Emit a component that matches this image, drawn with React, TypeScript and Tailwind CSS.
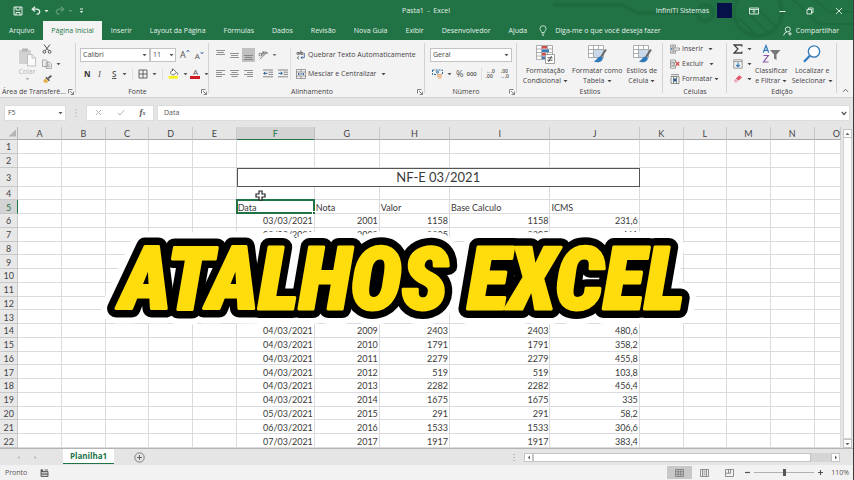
import type { ReactNode } from 'react';

type IconProps = {
  w: number;
  h: number;
  children: ReactNode;
  className?: string;
};

function Icon({ w, h, children, className = '' }: IconProps) {
  return (
    <svg width={w} height={h} viewBox={`0 0 ${w} ${h}`} fill="none" stroke="currentColor" className={`shrink-0 ${className}`} aria-hidden="true">
      {children}
    </svg>
  );
}

function Caret() {
  return (
    <Icon w={5} h={4}>
      <path d="M0.5 1h4L2.5 3.2z" fill="currentColor" stroke="none" />
    </Icon>
  );
}

function Launcher() {
  return (
    <button type="button" aria-label="Mais opções" className="absolute right-[2px] bottom-[2px] text-[#666]">
      <Icon w={6} h={6}>
        <path d="M0.5 4.5v-4h4M2.2 2.2l3 3M5.5 2.6v2.9H2.6" strokeWidth={0.8} />
      </Icon>
    </button>
  );
}

type GroupProps = {
  label: string;
  width: string;
  launcher?: boolean;
  children: ReactNode;
};

function Group({ label, width, launcher, children }: GroupProps) {
  return (
    <section className={`relative flex shrink-0 flex-col ${width}`}>
      <div className="flex flex-1 items-center pt-px">{children}</div>
      <h2 className={`text-center leading-[10px] whitespace-nowrap text-[#444] ${launcher ? 'pr-3 pl-[2px]' : ''}`}>{label}</h2>
      {launcher && <Launcher />}
      <span className="absolute top-[3px] right-0 bottom-1 w-px bg-[#d2d2d2]" />
    </section>
  );
}

function IconButton({ label, caret, active, children }: { label: string; caret?: boolean; active?: boolean; children: ReactNode }) {
  return (
    <button type="button" aria-label={label} className={`flex h-[14px] items-center gap-1 ${active ? 'bg-[#c0c0c0] px-[2px]' : ''}`}>
      {children}
      {caret && <Caret />}
    </button>
  );
}

const alignPaths = {
  top: 'M0 .5h9M1 2.5h7M0 4.5h9',
  middle: 'M0 3.5h9M1 5.5h7M0 7.5h9',
  bottom: 'M0 5.5h9M1 7.5h7M0 9.5h9',
  left: 'M0 1.5h9M0 3.5h6M0 5.5h9M0 7.5h6',
  center: 'M0 1.5h9M1.5 3.5h6M0 5.5h9M1.5 7.5h6',
  right: 'M0 1.5h9M3 3.5h6M0 5.5h9M3 7.5h6',
};

function Lines({ d }: { d: string }) {
  return (
    <Icon w={9} h={10}>
      <path d={d} strokeWidth={0.8} />
    </Icon>
  );
}

function TitleBar() {
  return (
    <header className="relative flex h-[21px] shrink-0 items-center text-[#e6f1ea]">
      <div className="flex flex-1 items-center gap-[6px] pl-[13px]">
        <button type="button" aria-label="Salvar">
          <Icon w={10} h={10}>
            <path d="M1 1h8v8H1zM3 1v3h4V1M3 9V6.5h4V9" />
          </Icon>
        </button>
        <button type="button" aria-label="Desfazer" className="flex items-center gap-[3px] pl-[2px]">
          <Icon w={10} h={9}>
            <path d="M4 .8L1.3 3.2L4 5.6M1.5 3.2h4.2c4 0 4 5-.2 5" strokeWidth={1.3} />
          </Icon>
          <Caret />
        </button>
        <button type="button" aria-label="Refazer" className="flex items-center gap-[3px] opacity-30">
          <Icon w={10} h={9}>
            <path d="M6 .8L8.7 3.2L6 5.6M8.5 3.2H4.3c-4 0-4 5 .2 5" strokeWidth={1.3} />
          </Icon>
          <Caret />
        </button>
        <button type="button" aria-label="Personalizar barra" className="flex items-center">
          <Icon w={5} h={6}>
            <path d="M1 1h3" />
            <path d="M.7 3h3.6L2.5 5z" fill="currentColor" stroke="none" />
          </Icon>
        </button>
      </div>
      <h1 className="mr-[14px]">Pasta1&nbsp; - &nbsp;Excel</h1>
      <div className="flex flex-1 items-center justify-end">
        <span>InfiniTI Sistemas</span>
        <span className="ml-2 h-[15px] w-[15px] bg-[#06114a]" />
        <button type="button" aria-label="Opções da faixa" className="ml-[17px]">
          <Icon w={10} h={8}>
            <path d="M.5 1h9v6h-9zM.5 2.5h9M5 6.5v-3M3.6 4.8L5 3.4l1.4 1.4" strokeWidth={0.9} />
          </Icon>
        </button>
        <button type="button" aria-label="Minimizar" className="ml-5">
          <Icon w={7} h={8}>
            <path d="M.5 4.5h6" />
          </Icon>
        </button>
        <button type="button" aria-label="Restaurar" className="ml-5">
          <Icon w={8} h={8}>
            <path d="M1 2.5h4.5V7H1zM2.5 2.5V1H7v4.5H5.5" strokeWidth={0.9} />
          </Icon>
        </button>
        <button type="button" aria-label="Fechar" className="mr-[10px] ml-[21px]">
          <Icon w={8} h={8}>
            <path d="M1 1l6 6M7 1L1 7" strokeWidth={0.9} />
          </Icon>
        </button>
      </div>
    </header>
  );
}

const tabsAfter = ['Inserir', 'Layout da Página', 'Fórmulas', 'Dados', 'Revisão', 'Nova Guia', 'Exibir', 'Desenvolvedor', 'Ajuda'];

function RibbonTabs() {
  return (
    <nav className="relative flex h-[19px] shrink-0 items-stretch text-[#e6f1ea]">
      <button type="button" className="px-[9px]">Arquivo</button>
      <button type="button" className="bg-[#f4f3f4] px-2 text-[#217346]">Página Inicial</button>
      {tabsAfter.map((tab) => (
        <button key={tab} type="button" className="px-[9px]">{tab}</button>
      ))}
      <button type="button" className="flex items-center gap-2 pl-[3px]">
        <Icon w={8} h={11}>
          <path d="M2.6 7.5C2.6 6 1 5.6 1 3.7a3 3 0 0 1 6 0C7 5.6 5.4 6 5.4 7.5zM2.8 9h2.4M3.2 10.3h1.6" strokeWidth={0.8} />
        </Icon>
        Diga-me o que você deseja fazer
      </button>
      <button type="button" className="mr-[14px] ml-auto flex items-center gap-[3px]">
        <Icon w={10} h={10}>
          <circle cx="4.8" cy="3.4" r="2.5" strokeWidth={0.9} />
          <path d="M.8 9.5c.2-2.2 1.5-3.4 3.4-3.6M5.2 7.8h3.6M7 6v3.6" strokeWidth={0.9} />
        </Icon>
        Compartilhar
      </button>
    </nav>
  );
}

function ClipboardGroup() {
  return (
    <Group label="Área de Transferê..." width="w-[76px]" launcher>
      <button type="button" className="ml-[18px] flex flex-col items-center text-[#b5b5b5]">
        <Icon w={18} h={20}>
          <path d="M1 3h12v14H1z" fill="#d3d2d3" stroke="none" />
          <path d="M4 1.5h6v3H4z" fill="#b5b5b5" stroke="none" />
          <path d="M9.5 7.5h4.5l3.5 3.5v8h-8z" fill="#fbfbfb" strokeWidth={0.8} />
          <path d="M14 7.5V11h3.5" strokeWidth={0.8} />
        </Icon>
        <span className="leading-[10px]">Colar</span>
        <Caret />
      </button>
      <div className="ml-[6px] flex flex-col gap-px text-[#555]">
        <IconButton label="Recortar">
          <Icon w={10} h={10}>
            <path d="M2 .5l4.7 6.2M8 .5L3.3 6.7" />
            <circle cx="2.4" cy="7.8" r="1.4" />
            <circle cx="7.6" cy="7.8" r="1.4" />
          </Icon>
        </IconButton>
        <IconButton label="Copiar" caret>
          <Icon w={10} h={10} className="text-[#999]">
            <path d="M.5 1h3.7l1.5 1.5v5H.5zM4.2 3.2h3.5l1.7 1.7v4.5H4.2z" fill="#eee" strokeWidth={0.8} />
            <path d="M5.5 6h2.5M5.5 7.5h2.5" strokeWidth={0.6} />
          </Icon>
        </IconButton>
        <IconButton label="Pincel de Formatação">
          <Icon w={10} h={9}>
            <path d="M9.3.8L6.2 3.4" strokeWidth={1.8} />
            <path d="M4 2.2l3.4 3.5" strokeWidth={1.6} />
            <path d="M3.3 3.3l3 3L4.5 8.3.8 6.5z" fill="#e8b04c" stroke="none" />
          </Icon>
        </IconButton>
      </div>
    </Group>
  );
}

function FontGroup() {
  return (
    <Group label="Fonte" width="w-[133px]" launcher>
      <div className="ml-1 flex flex-col gap-[5px] text-[#555]">
        <div className="flex items-center">
          <div className="relative">
            <select aria-label="Fonte" className="block h-[14px] w-[70px] appearance-none border border-[#c3c3c3] bg-white px-[2px] text-[#444]">
              <option>Calibri</option>
            </select>
            <span className="pointer-events-none absolute top-[5px] right-[3px]"><Caret /></span>
          </div>
          <div className="relative">
            <select aria-label="Tamanho da fonte" className="block h-[14px] w-[26px] appearance-none border border-[#c3c3c3] bg-white px-[2px] text-[#444]">
              <option>11</option>
            </select>
            <span className="pointer-events-none absolute top-[5px] right-[2px]"><Caret /></span>
          </div>
          <button type="button" aria-label="Aumentar fonte" className="ml-1 flex text-[9px] leading-[12px]">
            A<Icon w={4} h={4}><path d="M.8 2.8L2 1.2l1.2 1.6" stroke="#2b5a92" /></Icon>
          </button>
          <button type="button" aria-label="Diminuir fonte" className="ml-[5px] flex pt-[2px] text-[8px] leading-[10px]">
            A<Icon w={4} h={4}><path d="M.8 1.2L2 2.8l1.2-1.6" stroke="#2b5a92" /></Icon>
          </button>
        </div>
        <div className="flex items-center pl-1">
          <button type="button" className="w-[14px] text-left text-[8px] font-bold text-[#333]">N</button>
          <button type="button" className="w-[14px] text-left font-[Liberation_Serif] text-[9px] italic">I</button>
          <button type="button" className="flex items-center gap-[6px] text-[8px] font-semibold">
            <span className="underline">S</span>
            <Caret />
          </button>
          <span className="mx-[5px] h-3 w-px bg-[#e0e0e0]" />
          <IconButton label="Bordas" caret>
            <Icon w={10} h={10}>
              <path d="M1 1h8v8H1zM5 1v8M1 5h8" strokeWidth={0.9} />
            </Icon>
          </IconButton>
          <span className="mx-[5px] h-3 w-px bg-[#e0e0e0]" />
          <IconButton label="Cor de preenchimento" caret>
            <Icon w={11} h={11}>
              <path d="M2 4.5L5.5 1.3 8.5 4.5 5 7.2z" fill="#fff" strokeWidth={0.8} />
              <path d="M4.5 3V.6M9 4.5c1 1.2 1 2 .3 2.3" strokeWidth={0.9} />
              <path d="M.5 8h9.5v2.7H.5z" fill="#fbf320" stroke="none" />
            </Icon>
          </IconButton>
          <button type="button" className="ml-[2px] flex items-center gap-1">
            <span className="w-[10px] border-b-[3px] border-[#cf1b22] text-center text-[8px] leading-[8px]">A</span>
            <Caret />
          </button>
        </div>
      </div>
    </Group>
  );
}

function AlignGroup() {
  return (
    <Group label="Alinhamento" width="w-[216px]" launcher>
      <div className="ml-[7px] flex flex-col gap-[5px] text-[#777]">
        <div className="flex items-center gap-[5px]">
          <IconButton label="Alinhar acima"><Lines d={alignPaths.top} /></IconButton>
          <IconButton label="Alinhar no meio"><Lines d={alignPaths.middle} /></IconButton>
          <div className="-mx-[2px]"><IconButton label="Alinhar abaixo" active><Lines d={alignPaths.bottom} /></IconButton></div>
          <IconButton label="Orientação" caret>
            <Icon w={10} h={10}>
              <path d="M2 9.2l7-7M9 4.2v-2H7" strokeWidth={0.9} />
              <circle cx="2.4" cy="4.6" r="1.4" />
              <path d="M3.8 3v3M5 1v3.4" />
              <circle cx="6.2" cy="3.2" r="1.1" />
            </Icon>
          </IconButton>
        </div>
        <div className="flex items-center gap-[5px]">
          <IconButton label="Alinhar à esquerda"><Lines d={alignPaths.left} /></IconButton>
          <IconButton label="Centralizar"><Lines d={alignPaths.center} /></IconButton>
          <IconButton label="Alinhar à direita"><Lines d={alignPaths.right} /></IconButton>
          <span />
          <IconButton label="Diminuir recuo">
            <Icon w={10} h={9}>
              <path d="M0 1h10M5.5 3.2H10M5.5 5.4H10M0 7.8h10" strokeWidth={0.9} />
              <path d="M4.5 4.3H.8M2.2 2.8L.8 4.3l1.4 1.5" stroke="#2b5a92" />
            </Icon>
          </IconButton>
          <IconButton label="Aumentar recuo">
            <Icon w={10} h={9}>
              <path d="M0 1h10M5.5 3.2H10M5.5 5.4H10M0 7.8h10" strokeWidth={0.9} />
              <path d="M.5 4.3h3.7M2.8 2.8l1.4 1.5-1.4 1.5" stroke="#2b5a92" />
            </Icon>
          </IconButton>
        </div>
      </div>
      <div className="ml-[2px] flex flex-col gap-[5px] border-l border-[#e0e0e0] pl-[5px] text-[#444]">
        <button type="button" className="flex h-[14px] items-center gap-[2px]">
          <Icon w={10} h={10}>
            <circle cx="1.9" cy="3.4" r="1.1" strokeWidth={0.8} />
            <path d="M3.2 2v2.6M4.8.5v4" strokeWidth={0.8} />
            <circle cx="6" cy="3.4" r="1.1" strokeWidth={0.8} />
            <path d="M3 6.8c-2-.4-2 2.4 0 2" strokeWidth={0.8} />
            <path d="M8.3 3v4.6H5M6.3 6.3L5 7.6l1.3 1.3" stroke="#2b5a92" strokeWidth={0.8} />
          </Icon>
          Quebrar Texto Automaticamente
        </button>
        <button type="button" className="flex h-[14px] items-center gap-[2px]">
          <Icon w={10} h={10}>
            <path d="M.5.5h9v9h-9zM.5 3h9M.5 7h9M5 .5V3M5 7v2.5" strokeWidth={0.7} stroke="#777" />
            <path d="M2 5h6M3 4L2 5l1 1M7 4l1 1-1 1" strokeWidth={0.8} stroke="#2b5a92" />
          </Icon>
          Mesclar e Centralizar
          <span className="pl-[3px]"><Caret /></span>
        </button>
      </div>
    </Group>
  );
}

function NumberGroup() {
  return (
    <Group label="Número" width="w-[92px]" launcher>
      <div className="ml-[5px] flex flex-col gap-[5px] text-[#555]">
        <div className="relative">
          <select aria-label="Formato de número" className="block h-[14px] w-[82px] appearance-none border border-[#c3c3c3] bg-white px-[2px] text-[#444]">
            <option>Geral</option>
          </select>
          <span className="pointer-events-none absolute top-[5px] right-[3px]"><Caret /></span>
        </div>
        <div className="flex items-center pl-[2px]">
          <IconButton label="Formato de contabilização" caret>
            <Icon w={11} h={10}>
              <path d="M.5 1h10v4.5H.5z" stroke="#2b6a9e" strokeDasharray="2 1" />
              <circle cx="5.5" cy="3.2" r="1" stroke="#2b6a9e" />
              <path d="M5 5.6h5M5 7.3h5M6 9h3.5" stroke="#e6a96a" strokeWidth={1.1} />
            </Icon>
          </IconButton>
          <button type="button" className="ml-[4px] text-[9px]">%</button>
          <button type="button" className="ml-[3px] text-[6px] font-semibold">000</button>
          <span className="mx-[4px] h-3 w-px bg-[#e0e0e0]" />
          <button type="button" className="w-[14px] text-left text-[5px] leading-[5px] font-semibold">
            <span className="text-[#2b5a92]">←</span>,0<br />,00
          </button>
          <button type="button" className="text-[5px] leading-[5px] font-semibold">
            ,00<br /><span className="text-[#2b5a92]">→</span>,0
          </button>
        </div>
      </div>
    </Group>
  );
}

function BigButton({ icon, first, second }: { icon: ReactNode; first: string; second: string }) {
  return (
    <button type="button" className="flex flex-col items-center pt-[2px] leading-[10px] whitespace-nowrap text-[#444]">
      {icon}
      <span className="mt-[2px]">{first}</span>
      <span className="flex items-center gap-[2px]">{second} <Caret /></span>
    </button>
  );
}

function TableBrushIcon() {
  return (
    <Icon w={20} h={20}>
      <path d="M1.5 1.5h15v12h-15zM1.5 5.5h15M1.5 9.5h15M6.5 1.5v12M11.5 1.5v12" stroke="#9a9a9a" strokeWidth={0.8} fill="#fff" />
      <path d="M6.5 5.5h10v8h-10z" fill="#c9d9ea" stroke="#9a9a9a" strokeWidth={0.6} />
      <path d="M19 5.5l-5 7.5" stroke="#666" strokeWidth={2} />
      <path d="M13.8 12.5c-3.4-.2-3.4 3.6-7 4.8 3.4 1.8 9 .8 9-3.4z" fill="#2f79b9" stroke="none" />
    </Icon>
  );
}

function StylesGroup() {
  return (
    <Group label="Estilos" width="w-[146px]">
      <div className="flex flex-1 justify-center gap-1">
        <BigButton
          first="Formatação"
          second="Condicional"
          icon={
            <Icon w={20} h={20}>
              <path d="M1.5 1.5h16v14h-16zM1.5 5h16M1.5 8.5h16M1.5 12h16M6.5 1.5v14M12.5 1.5v14" stroke="#9a9a9a" strokeWidth={0.8} fill="#fff" />
              <path d="M7 2h5v2.6H7zM7 9h4v2.6H7z" fill="#d2504a" stroke="none" />
              <path d="M7 5.4h7v2.6H7zM7 12.4h3v2.6H7z" fill="#3b78b5" stroke="none" />
              <path d="M10.5 10.5h9v9h-9z" fill="#fff" stroke="#888" strokeWidth={0.8} />
              <path d="M12.5 13.8h5M12.5 16.2h5M16.5 12l-3 6" stroke="#444" strokeWidth={0.9} />
            </Icon>
          }
        />
        <BigButton first="Formatar como" second="Tabela" icon={<TableBrushIcon />} />
        <BigButton first="Estilos de" second="Célula" icon={<TableBrushIcon />} />
      </div>
    </Group>
  );
}

function CellsGroup() {
  return (
    <Group label="Células" width="w-[64px]">
      <div className="ml-[7px] flex flex-col gap-px text-[#444]">
        <button type="button" className="flex h-[14px] items-center gap-[2px]">
          <Icon w={10} h={10}>
            <path d="M.5 1h5v2.2h-5zM.5 7h5v2.2h-5zM3.5 4h6v2.2h-6zM3 1v2M3 7v2" stroke="#888" strokeWidth={0.8} />
            <path d="M3 5H.5M1.6 3.9L.5 5l1.1 1.1" stroke="#2b5a92" strokeWidth={0.8} />
          </Icon>
          Inserir <span className="pl-[3px]"><Caret /></span>
        </button>
        <button type="button" className="flex h-[14px] items-center gap-[2px]">
          <Icon w={10} h={10}>
            <path d="M.5 1h5v2.2h-5zM.5 7h5v2.2h-5zM.5 4h4v2.2h-4z" stroke="#888" strokeWidth={0.8} />
            <path d="M5.8 3l3.4 3.6M9.2 3L5.8 6.6" stroke="#d2403a" strokeWidth={1.2} />
          </Icon>
          Excluir <span className="pl-[3px]"><Caret /></span>
        </button>
        <button type="button" className="flex h-[14px] items-center gap-[2px]">
          <Icon w={10} h={10}>
            <path d="M1 2.5h8v7H1zM3.5 2.5v7M6.5 2.5v7M1 .7h8" stroke="#777" strokeWidth={0.8} />
            <path d="M3.5 4.5h3v3h-3z" fill="#2b5a92" stroke="none" />
          </Icon>
          Formatar <Caret />
        </button>
      </div>
    </Group>
  );
}

function EditGroup() {
  return (
    <Group label="Edição" width="w-[110px]">
      <div className="ml-[6px] flex flex-col gap-px text-[#444]">
        <IconButton label="AutoSoma" caret>
          <Icon w={10} h={10}>
            <path d="M8.8 2.6V1H1.2L5 5 1.2 9h7.6V7.4" strokeWidth={1.3} />
          </Icon>
        </IconButton>
        <IconButton label="Preencher" caret>
          <Icon w={10} h={10}>
            <path d="M.8 .8h8.4v8.4H.8zM.8 2.6h8.4" stroke="#888" strokeWidth={0.8} />
            <path d="M5 3.6v4M3.2 6L5 7.8 6.8 6" stroke="#2f79b9" strokeWidth={1.1} />
          </Icon>
        </IconButton>
        <IconButton label="Limpar" caret>
          <Icon w={10} h={10}>
            <path d="M2.8 4.4L6.4 1.2l2.6 2.2-3.6 3.4z" fill="#e0596b" stroke="none" />
            <path d="M2.3 4.9l2.5 2.4-1.4 1.2H2L.8 7z" fill="#f0a6af" stroke="none" />
          </Icon>
        </IconButton>
      </div>
      <div className="ml-[3px] flex flex-1 gap-1">
        <BigButton
          first="Classificar"
          second="e Filtrar"
          icon={
            <Icon w={20} h={20}>
              <path d="M2.3 8.5L5 1.5l2.7 7M3.2 6.3h3.6" stroke="#2f79b9" strokeWidth={1.2} />
              <path d="M2.5 11.5h4.8L2.5 18h5" stroke="#8a5aa5" strokeWidth={1.2} />
              <path d="M9 6h10.5l-4 4.5V16l-2.5-1.5v-4z" fill="#777" stroke="none" />
            </Icon>
          }
        />
        <BigButton
          first="Localizar e"
          second="Selecionar"
          icon={
            <Icon w={20} h={20}>
              <circle cx="12" cy="7.5" r="5.7" stroke="#2f79b9" strokeWidth={1.3} fill="#fff" />
              <path d="M7.8 11.8L2 17.8" stroke="#2f79b9" strokeWidth={2.2} />
            </Icon>
          }
        />
      </div>
    </Group>
  );
}

function FormulaBar() {
  return (
    <div className="flex h-[27px] shrink-0 items-center bg-[#e6e5e6] pt-[2px] pr-[3px] pb-[4px] pl-1 text-[#555]">
      <div className="relative">
        <input aria-label="Caixa de nome" defaultValue="F5" className="block h-4 w-[62px] border border-[#dcdcdc] bg-white px-[3px]" />
        <span className="absolute top-[6px] right-[3px]"><Caret /></span>
      </div>
      <Icon w={2} h={10} className="mx-[9px] text-[#aaa]">
        <path d="M1 1v1.2M1 4.4v1.2M1 7.8V9" />
      </Icon>
      <div className="flex h-4 w-[68px] items-center justify-around border border-[#dcdcdc] bg-white">
        <button type="button" aria-label="Cancelar" className="text-[#b5b5b5]">
          <Icon w={7} h={7}><path d="M1 1l5 5M6 1L1 6" /></Icon>
        </button>
        <button type="button" aria-label="Inserir" className="text-[#b5b5b5]">
          <Icon w={8} h={7}><path d="M.8 3.8L3 6l4.2-5" /></Icon>
        </button>
        <button type="button" className="font-[Liberation_Serif] text-[9px] font-bold italic">
          f<span className="text-[6px]">x</span>
        </button>
      </div>
      <div className="relative ml-[3px] flex-1">
        <input aria-label="Barra de fórmulas" defaultValue="Data" className="block h-4 w-full border border-[#dcdcdc] bg-white px-[6px]" />
        <Icon w={6} h={5} className="absolute top-[6px] right-[3px]">
          <path d="M.8 1L3 3.5 5.2 1" strokeWidth={1.2} />
        </Icon>
      </div>
    </div>
  );
}

const columns = [
  { name: 'A', width: 'w-[43px]' },
  { name: 'B', width: 'w-[43px]' },
  { name: 'C', width: 'w-[43px]' },
  { name: 'D', width: 'w-[43px]' },
  { name: 'E', width: 'w-[43px]' },
  { name: 'F', width: 'w-[77px]' },
  { name: 'G', width: 'w-[64px]' },
  { name: 'H', width: 'w-[69px]' },
  { name: 'I', width: 'w-[99px]' },
  { name: 'J', width: 'w-[88px]' },
  { name: 'K', width: 'w-[43px]' },
  { name: 'L', width: 'w-[43px]' },
  { name: 'M', width: 'w-[43px]' },
  { name: 'N', width: 'w-[43px]' },
  { name: 'O', width: 'w-[26px] text-right' },
];

// values for columns F to J, by sheet row
const data: Record<number, string[]> = {
  5: ['Data', 'Nota', 'Valor', 'Base Calculo', 'ICMS'],
  6: ['03/03/2021', '2001', '1158', '1158', '231,6'],
  7: ['03/03/2021', '2002', '2305', '2305', '461'],
  14: ['04/03/2021', '2009', '2403', '2403', '480,6'],
  15: ['04/03/2021', '2010', '1791', '1791', '358,2'],
  16: ['04/03/2021', '2011', '2279', '2279', '455,8'],
  17: ['04/03/2021', '2012', '519', '519', '103,8'],
  18: ['04/03/2021', '2013', '2282', '2282', '456,4'],
  19: ['04/03/2021', '2014', '1675', '1675', '335'],
  20: ['05/03/2021', '2015', '291', '291', '58,2'],
  21: ['06/03/2021', '2016', '1533', '1533', '306,6'],
  22: ['07/03/2021', '2017', '1917', '1917', '383,4'],
};

const rows = Array.from({ length: 22 }, (_, i) => i + 1);

function SheetRow({ row }: { row: number }) {
  const values = data[row];
  return (
    <tr className={row === 3 ? 'h-[19px]' : ''}>
      <th scope="row" className={`border-r border-b p-0 pt-px text-[9px] font-normal ${row === 5 ? 'border-r-[#217346] border-b-[#c8c8c8] bg-[#d3d3d3] text-[#217346]' : 'border-[#c8c8c8] bg-[#e9e8e9] text-[#444]'}`}>
        {row}
      </th>
      {columns.map((col, i) => {
        if (row === 3 && i === 5) {
          return (
            <td key={col.name} colSpan={5} className="border border-[#555] p-0 text-center text-[13px]">NF-E 03/2021</td>
          );
        }
        if (row === 3 && i > 5 && i < 10) return null;
        const text = values && i >= 5 && i < 10 ? values[i - 5] : '';
        const selected = row === 5 && i === 5;
        return (
          <td key={col.name} className={`relative border-r border-b border-[#dadadf] px-px pt-px pb-0 whitespace-nowrap ${row === 5 ? 'text-left' : 'text-right'}`}>
            {text}
            {selected && (
              <span className="absolute -inset-px border-2 border-[#217346]">
                <span className="absolute -right-[3px] -bottom-[3px] h-1 w-1 border border-white bg-[#217346]" />
              </span>
            )}
          </td>
        );
      })}
    </tr>
  );
}

function Sheet() {
  return (
    <main className="flex min-h-0 flex-1 bg-[#e6e5e6]">
      <table className="h-full w-full flex-1 table-fixed border-separate border-spacing-0 bg-white font-[Lato,sans-serif] text-[9px] leading-none text-[#3a3a3a]">
        <thead>
          <tr className="h-[13px] bg-[#e6e5e6] text-[9px] text-[#444]">
            <th className="w-[18px] border-r border-b border-[#b4b4b4] p-0">
              <Icon w={9} h={8} className="ml-auto">
                <path d="M8 .5v7H.5z" fill="#b4b4b4" stroke="none" />
              </Icon>
            </th>
            {columns.map((col) => (
              <th key={col.name} scope="col" className={`border-r border-b p-0 font-normal ${col.width} ${col.name === 'F' ? 'border-r-[#c0c0c0] border-b-[#217346] bg-[#d3d3d3] text-[#217346]' : 'border-r-[#c8c8c8] border-b-[#a8a8a8]'}`}>
                {col.name}
              </th>
            ))}
          </tr>
        </thead>
        <tbody>
          {rows.map((row) => (
            <SheetRow key={row} row={row} />
          ))}
        </tbody>
      </table>
      <div className="mr-px ml-[2px] flex w-[9px] flex-col text-[#666]">
        <button type="button" aria-label="Rolar para cima" className="mt-[2px] flex h-[9px] items-center justify-center border border-[#c4c4c4] bg-white">
          <Icon w={5} h={4}><path d="M.5 3h4L2.5.8z" fill="currentColor" stroke="none" /></Icon>
        </button>
        <span className="flex-1 border border-t-0 border-[#d0d0d0] bg-[#fbfbfb]" />
        <button type="button" aria-label="Rolar para baixo" className="flex h-[9px] items-center justify-center border border-[#c4c4c4] bg-white">
          <Caret />
        </button>
      </div>
    </main>
  );
}

function SheetTabs() {
  return (
    <div className="flex h-[17px] shrink-0 items-center border-t border-[#b4b4b4] bg-[#e6e5e6] text-[#666]">
      <div className="flex w-[63px] gap-[12px] pl-4 text-[#b4b4b4]">
        <button type="button" aria-label="Planilha anterior">
          <Icon w={5} h={5}><path d="M3.5 .8v3.4L1.5 2.5z" fill="currentColor" stroke="none" /></Icon>
        </button>
        <button type="button" aria-label="Próxima planilha">
          <Icon w={5} h={5}><path d="M1.5 .8v3.4l2-1.7z" fill="currentColor" stroke="none" /></Icon>
        </button>
      </div>
      <button type="button" className="h-[15px] self-start border-b border-[#217346] bg-white px-[7px] text-[8px] font-bold text-[#217346]">Planilha1</button>
      <button type="button" aria-label="Nova planilha" className="ml-5">
        <Icon w={11} h={11}>
          <circle cx="5.5" cy="5.5" r="4.7" strokeWidth={0.8} />
          <path d="M5.5 3v5M3 5.5h5" />
        </Icon>
      </button>
      <Icon w={2} h={9} className="ml-auto text-[#999]">
        <path d="M1 1v1M1 4v1M1 7v1" />
      </Icon>
      <div className="mr-[13px] ml-[9px] flex h-[9px] w-[37%] bg-[#d6d5d6]">
        <button type="button" aria-label="Rolar para a esquerda" className="flex w-[9px] items-center justify-center border border-[#c4c4c4] bg-white">
          <Icon w={4} h={5}><path d="M3 .5v4L.8 2.5z" fill="currentColor" stroke="none" /></Icon>
        </button>
        <span className="w-[88%] border border-[#c4c4c4] bg-white" />
        <button type="button" aria-label="Rolar para a direita" className="ml-auto flex w-[9px] items-center justify-center border border-[#c4c4c4] bg-white">
          <Icon w={4} h={5}><path d="M1 .5v4l2.2-2z" fill="currentColor" stroke="none" /></Icon>
        </button>
      </div>
    </div>
  );
}

function StatusBar() {
  return (
    <footer className="flex h-[15px] shrink-0 items-center bg-[#f3f2f3] pl-[5px] text-[#555]">
      <span>Pronto</span>
      <button type="button" aria-label="Gravar macro" className="ml-[13px]">
        <Icon w={9} h={8}>
          <path d="M1 2.5h7v5H1zM1 4.2h7M1 5.8h7M4.5 1h3.5" strokeWidth={0.9} />
          <circle cx="1.8" cy="1.6" r="1.3" fill="currentColor" stroke="none" />
        </Icon>
      </button>
      <div className="ml-auto flex h-[13px] items-center text-[#777]">
        <button type="button" aria-label="Normal" className="flex h-full w-[25px] items-center justify-center bg-[#c8c8c8]">
          <Icon w={9} h={8}><path d="M.5.5h8v7h-8zM.5 2.8h8M.5 5.2h8M3.2.5v7M5.8.5v7" strokeWidth={0.8} /></Icon>
        </button>
        <button type="button" aria-label="Layout da Página" className="flex w-[25px] justify-center">
          <Icon w={9} h={8}><path d="M.5.5h8v7h-8zM2.5.5v7M6.5.5v7M3.5 2.2h2M3.5 4h2M3.5 5.8h2" strokeWidth={0.8} /></Icon>
        </button>
        <button type="button" aria-label="Quebra de página" className="flex w-[25px] justify-center">
          <Icon w={9} h={8}><path d="M.5.5h8v7h-8zM3.5.5v3.8h-3M5.5.5v3.8H3.5" strokeWidth={0.8} /></Icon>
        </button>
      </div>
      <button type="button" aria-label="Reduzir zoom" className="ml-[2px]">
        <Icon w={7} h={7}><path d="M1 3.5h5" strokeWidth={1.2} /></Icon>
      </button>
      <input
        type="range"
        aria-label="Zoom"
        min={10}
        max={210}
        defaultValue={110}
        className="mx-[3px] h-[9px] w-[60px] appearance-none bg-transparent [&::-webkit-slider-runnable-track]:h-px [&::-webkit-slider-runnable-track]:bg-[#b0b0b0] [&::-webkit-slider-thumb]:-mt-[3px] [&::-webkit-slider-thumb]:h-[7px] [&::-webkit-slider-thumb]:w-[3px] [&::-webkit-slider-thumb]:appearance-none [&::-webkit-slider-thumb]:bg-[#555]"
      />
      <button type="button" aria-label="Ampliar zoom">
        <Icon w={7} h={7}><path d="M1 3.5h5M3.5 1v5" strokeWidth={1.1} /></Icon>
      </button>
      <span className="mr-1 ml-[7px]">110%</span>
    </footer>
  );
}

function Headline() {
  return (
    <svg
      viewBox="0 0 620 110"
      className="pointer-events-none absolute top-[223px] left-[10.4%] w-[72.6%] overflow-visible"
      fontFamily="'Roboto Condensed', Roboto, sans-serif"
      fontWeight="900"
      fontStyle="italic"
      fontSize="87"
      textAnchor="middle"
      strokeLinejoin="round"
    >
      <use href="#headline" fill="#fff" stroke="#fff" strokeWidth={30} />
      <use href="#headline" fill="#000" stroke="#000" strokeWidth={18} />
      <g fill="#ffdd0c" stroke="#ffdd0c" strokeWidth={3}>
        <text id="headline" x="314" y="86">ATALHOS EXCEL</text>
      </g>
    </svg>
  );
}

export default function App() {
  return (
    <div className="relative flex h-screen w-full flex-col overflow-hidden border-r border-[#3c3c3c] bg-[#f4f3f4] font-['Open_Sans',sans-serif] text-[7px] leading-[10px]">
      <div className="relative shrink-0 bg-[#217346]">
        <svg viewBox="0 0 300 40" className="absolute top-0 right-0 h-10" fill="none" stroke="#1e6b40" strokeWidth={4} aria-hidden="true">
          <path d="M0 5h70l14 8h60" />
          <circle cx="152" cy="13" r="8" />
          <circle cx="205" cy="12" r="24" />
          <path d="M186 18l18 18M194 12l20 20M204 8l20 20M240 0l26 24h34M262 0l14 12h24" strokeWidth={2} />
        </svg>
        <TitleBar />
        <RibbonTabs />
      </div>
      <div className="flex h-[57px] shrink-0 bg-[#f4f3f4]">
        <ClipboardGroup />
        <FontGroup />
        <AlignGroup />
        <NumberGroup />
        <StylesGroup />
        <CellsGroup />
        <EditGroup />
        <button type="button" aria-label="Recolher faixa de opções" className="mt-auto ml-[5px] pb-1 text-[#666]">
          <Icon w={7} h={5}><path d="M1 3.8l2.5-2.5L6 3.8" /></Icon>
        </button>
      </div>
      <div className="h-[3px] shrink-0 border-t border-[#d2d2d2] bg-[#e6e5e6]" />
      <FormulaBar />
      <Sheet />
      <SheetTabs />
      <StatusBar />
      <svg width="11" height="11" viewBox="0 0 11 11" className="absolute top-[190px] left-[255px]" aria-hidden="true">
        <path d="M4 1h3v3h3v3H7v3H4V7H1V4h3z" fill="#fff" stroke="#222" strokeWidth={1.2} />
      </svg>
      <Headline />
    </div>
  );
}
